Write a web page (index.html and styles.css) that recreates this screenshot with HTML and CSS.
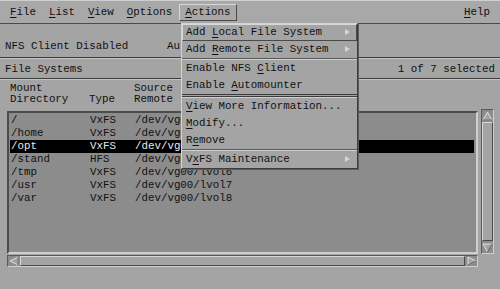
FILE: index.html
```html
<!DOCTYPE html>
<html lang="en">
<head>
    <meta charset="UTF-8">
    <title>File Systems</title>
    <link rel="stylesheet" href="styles.css">
</head>
<body>
    <div class="window">
        <div class="menubar">
            <span class="mitem"><u>F</u>ile</span>
            <span class="mitem"><u>L</u>ist</span>
            <span class="mitem"><u>V</u>iew</span>
            <span class="mitem"><u>O</u>ptions</span>
            <span class="mitem active"><u>A</u>ctions</span>
            <span class="mitem help"><u>H</u>elp</span>
        </div>

        <div class="status">
            <span class="status-nfs">NFS Client Disabled</span>
            <span>Automounter Disabled</span>
        </div>
        <div class="sep"></div>

        <div class="title-row">
            <span>File Systems</span>
            <span>1 of 7 selected</span>
        </div>
        <div class="sep"></div>

        <div class="headers">
            <div class="c1">Mount<br>Directory</div>
            <div class="c2"><br>Type</div>
            <div class="c3">Source<br>Remote</div>
        </div>

        <div class="list-wrap">
            <div class="listbox">
                <div class="row"><span class="c1">/</span><span class="c2">VxFS</span><span>/dev/vg00/lvol3</span></div>
                <div class="row"><span class="c1">/home</span><span class="c2">VxFS</span><span>/dev/vg00/lvol4</span></div>
                <div class="row selected"><span class="c1">/opt</span><span class="c2">VxFS</span><span>/dev/vg00/lvol5</span></div>
                <div class="row"><span class="c1">/stand</span><span class="c2">HFS</span><span>/dev/vg00/lvol1</span></div>
                <div class="row"><span class="c1">/tmp</span><span class="c2">VxFS</span><span>/dev/vg00/lvol6</span></div>
                <div class="row"><span class="c1">/usr</span><span class="c2">VxFS</span><span>/dev/vg00/lvol7</span></div>
                <div class="row"><span class="c1">/var</span><span class="c2">VxFS</span><span>/dev/vg00/lvol8</span></div>
            </div>
            <div class="vscroll">
                <div class="arrow up"><svg width="11" height="10" viewBox="0 0 11 10"><polygon points="5.5,1 10,9 1,9" fill="#a4a4a4" stroke="#e0e0e0"/><polyline points="10,9 1,9" fill="none" stroke="#555"/></svg></div>
                <div class="vthumb"></div>
                <div class="arrow down"><svg width="11" height="10" viewBox="0 0 11 10"><polygon points="1,1 10,1 5.5,9" fill="#a4a4a4" stroke="#e0e0e0"/><polyline points="10,1 5.5,9" fill="none" stroke="#555"/></svg></div>
            </div>
        </div>

        <div class="hscroll">
            <div class="harrow"><svg width="10" height="10" viewBox="0 0 10 10"><polygon points="1,5 9,1 9,9" fill="#a4a4a4" stroke="#e0e0e0"/><polyline points="9,1 9,9" fill="none" stroke="#555"/></svg></div>
            <div class="hthumb"></div>
            <div class="harrow"><svg width="10" height="10" viewBox="0 0 10 10"><polygon points="1,1 9,5 1,9" fill="#a4a4a4" stroke="#e0e0e0"/><polyline points="9,5 1,9" fill="none" stroke="#555"/></svg></div>
        </div>

        <!-- Actions pulldown -->
        <div class="pulldown">
            <div class="pitem armed">Add <u>L</u>ocal File System<span class="cascade"></span></div>
            <div class="pitem">Add <u>R</u>emote File System<span class="cascade"></span></div>
            <div class="psep"></div>
            <div class="pitem">Enable NFS <u>C</u>lient</div>
            <div class="pitem">Enable <u>A</u>utomounter</div>
            <div class="psep double"></div>
            <div class="pitem"><u>V</u>iew More Information...</div>
            <div class="pitem"><u>M</u>odify...</div>
            <div class="pitem">R<u>e</u>move</div>
            <div class="psep"></div>
            <div class="pitem">V<u>x</u>FS Maintenance<span class="cascade"></span></div>
        </div>
    </div>
</body>
</html>
```
FILE: styles.css
```css
body {
    margin: 0;
    background-color: #a4a4a4;
    font-family: "Liberation Mono", "DejaVu Sans Mono", monospace;
    font-size: 10.8px;
    color: #111;
}

u {
    text-decoration-thickness: 1px;
    text-underline-offset: 2px;
}

.window {
    position: relative;
    width: 500px;
    height: 289px;
    overflow: hidden;
}

.menubar {
    display: flex;
    align-items: center;
    height: 22px;
    padding-left: 4px;
    border-top: 1px solid #cfcfcf;
    border-bottom: 1px solid #4a4a4a;
    background-color: #a8a8a8;
}

.mitem {
    padding: 1px 5px 2px;
    margin-right: 1px;
    border: 1px solid transparent;
}

.mitem.active {
    border-color: #d8d8d8 #4a4a4a #4a4a4a #d8d8d8;
}

.mitem.help {
    margin-left: auto;
    margin-right: 4px;
}

.status {
    display: flex;
    align-items: center;
    box-sizing: border-box;
    height: 33px;
    padding: 10px 0 0 5px;
}

.status-nfs {
    width: 162px;
}

.sep {
    height: 0;
    border-top: 1px solid #3c3c3c;
    border-bottom: 1px solid #c4c4c4;
}

.title-row {
    display: flex;
    justify-content: space-between;
    align-items: center;
    height: 19px;
    padding: 0 5px;
}

.headers {
    display: flex;
    height: 29px;
    padding: 3px 0 0 10px;
    line-height: 11px;
    box-sizing: border-box;
}

.c1 {
    display: inline-block;
    width: 79px;
}

.c2 {
    display: inline-block;
    width: 45px;
}

.list-wrap {
    display: flex;
    align-items: flex-start;
    padding-left: 7px;
    height: 146px;
}

.listbox {
    box-sizing: border-box;
    width: 471px;
    height: 143px;
    margin-top: 2px;
    padding: 1px 2px 0 1px;
    background-color: #8c8c8c;
    border: 2px solid;
    border-color: #4c4c4c #cfcfcf #cfcfcf #4c4c4c;
}

.row {
    height: 13px;
    line-height: 13px;
    padding-left: 1px;
    white-space: nowrap;
}

.row.selected {
    background-color: #000;
    color: #e8e8e8;
}

.vscroll {
    box-sizing: border-box;
    display: flex;
    flex-direction: column;
    width: 13px;
    height: 145px;
    margin-left: 3px;
    background-color: #8c8c8c;
    border: 1px solid;
    border-color: #5a5a5a #d0d0d0 #d0d0d0 #5a5a5a;
}

.arrow {
    height: 11px;
    display: flex;
    justify-content: center;
    align-items: center;
}

.vthumb {
    flex: 1;
    margin: 1px 0;
    background-color: #a4a4a4;
    border: 1px solid;
    border-color: #d8d8d8 #4a4a4a #4a4a4a #d8d8d8;
}

.hscroll {
    box-sizing: border-box;
    display: flex;
    width: 471px;
    height: 12px;
    margin: 0 0 0 7px;
    background-color: #8c8c8c;
    border: 1px solid;
    border-color: #5a5a5a #d0d0d0 #d0d0d0 #5a5a5a;
}

.harrow {
    width: 11px;
    display: flex;
    justify-content: center;
    align-items: center;
}

.hthumb {
    flex: 1;
    margin: 0 1px;
    background-color: #a4a4a4;
    border: 1px solid;
    border-color: #d8d8d8 #4a4a4a #4a4a4a #d8d8d8;
}

/* pulldown menu */
.pulldown {
    position: absolute;
    left: 181px;
    top: 23px;
    width: 177px;
    box-sizing: border-box;
    background-color: #a4a4a4;
    border: 1px solid;
    border-color: #d4d4d4 #3c3c3c #3c3c3c #d4d4d4;
    box-shadow: 1px 1px 0 #5c5c5c;
}

.pitem {
    position: relative;
    height: 17px;
    line-height: 15px;
    padding-left: 3px;
    box-sizing: border-box;
    border: 1px solid transparent;
    white-space: nowrap;
}

.pitem.armed {
    border-color: #d8d8d8 #4a4a4a #4a4a4a #d8d8d8;
}

.cascade {
    position: absolute;
    right: 6px;
    top: 4px;
    width: 0;
    height: 0;
    border-left: 5px solid #d4d4d4;
    border-top: 3px solid transparent;
    border-bottom: 3px solid transparent;
}

.psep {
    height: 0;
    border-top: 1px solid #5a5a5a;
    border-bottom: 1px solid #d0d0d0;
}

.psep.double {
    height: 1px;
    border-top: 1px solid #3c3c3c;
    border-bottom: 1px solid #3c3c3c;
    box-shadow: 0 1px 0 #d0d0d0;
    margin-bottom: 1px;
}
```
